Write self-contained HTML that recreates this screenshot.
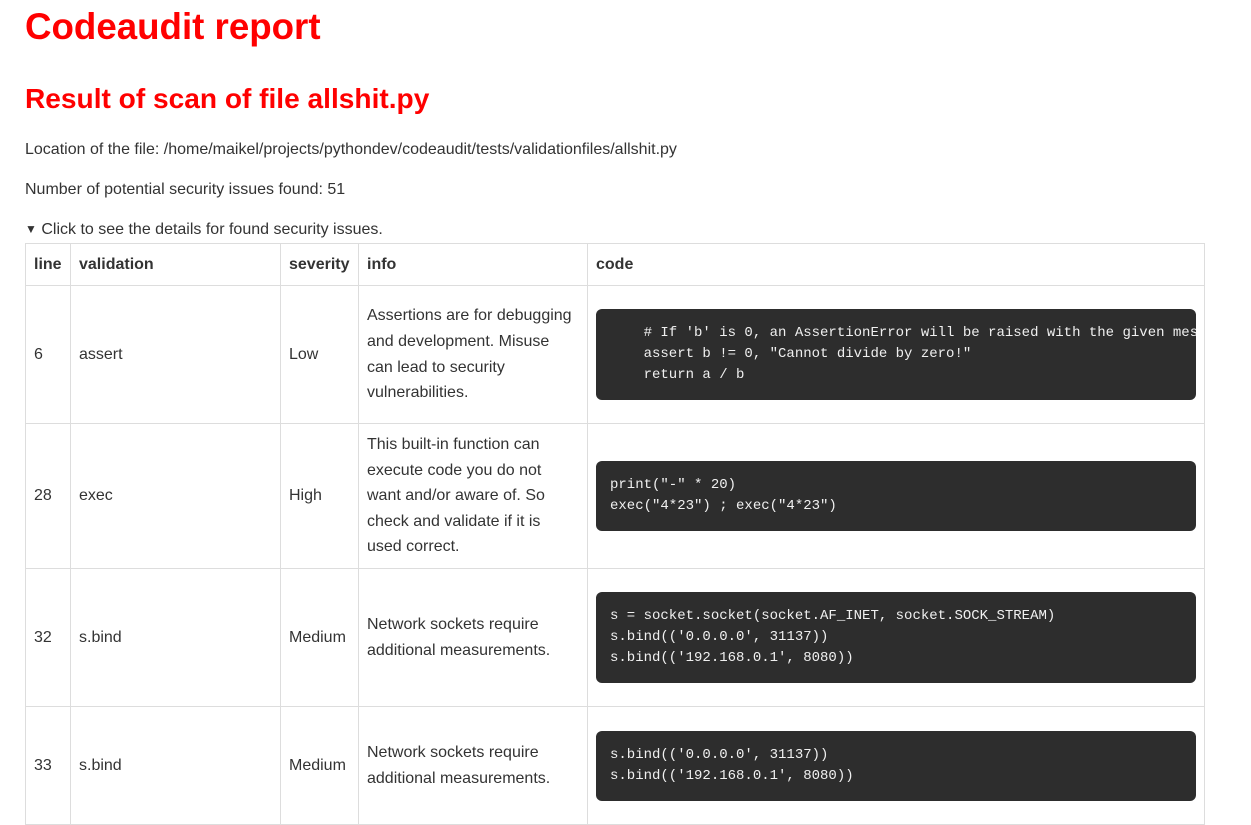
<!DOCTYPE html>
<html><head><meta charset="utf-8"><style>
body{margin:0;padding:0 25px;font-family:"Liberation Sans",sans-serif;color:#333;font-size:16px;background:#fff}
h1{color:#f00;font-size:36.7px;margin:0;position:absolute;top:5px;left:25px;line-height:44px}
h2{color:#f00;font-size:28.1px;margin:0;position:absolute;top:81px;left:25px;line-height:36px}
p{position:absolute;left:25px;margin:0;line-height:20px}
.sum{position:absolute;left:25px;top:220px;line-height:20px}
table{position:absolute;left:25px;top:243px;border-collapse:collapse;width:1180px;table-layout:fixed}
td,th{border:1px solid #ddd;padding:0 8px;vertical-align:middle;text-align:left;line-height:25.6px}
th{height:41px;font-weight:bold}
pre{background:#2d2d2d;color:#f0f0f0;font-family:"Liberation Mono",monospace;font-size:14px;line-height:21px;padding:14px;margin:0;border-radius:6px;overflow:hidden;white-space:pre}
</style></head><body>
<h1>Codeaudit report</h1>
<h2>Result of scan of file allshit.py</h2>
<p style="top:140px">Location of the file: /home/maikel/projects/pythondev/codeaudit/tests/validationfiles/allshit.py</p>
<p style="top:180px">Number of potential security issues found: 51</p>
<div class="sum"><span style="font-size:12px;position:relative;top:-1px">▼</span> Click to see the details for found security issues.</div>
<table>
<colgroup><col style="width:45px"><col style="width:210px"><col style="width:78px"><col style="width:229px"><col></colgroup>
<tr><th>line</th><th>validation</th><th>severity</th><th>info</th><th>code</th></tr>
<tr style="height:138px"><td>6</td><td>assert</td><td>Low</td><td>Assertions are for debugging and development. Misuse can lead to security vulnerabilities.</td><td><pre>    # If 'b' is 0, an AssertionError will be raised with the given message
    assert b != 0, "Cannot divide by zero!"
    return a / b</pre></td></tr>
<tr style="height:145px"><td>28</td><td>exec</td><td>High</td><td>This built-in function can execute code you do not want and/or aware of. So check and validate if it is used correct.</td><td><pre>print("-" * 20)
exec("4*23") ; exec("4*23")</pre></td></tr>
<tr style="height:138px"><td>32</td><td>s.bind</td><td>Medium</td><td>Network sockets require additional measurements.</td><td><pre>s = socket.socket(socket.AF_INET, socket.SOCK_STREAM)
s.bind(('0.0.0.0', 31137))
s.bind(('192.168.0.1', 8080))</pre></td></tr>
<tr style="height:118px"><td>33</td><td>s.bind</td><td>Medium</td><td>Network sockets require additional measurements.</td><td><pre>s.bind(('0.0.0.0', 31137))
s.bind(('192.168.0.1', 8080))</pre></td></tr>
</table>
</body></html>
